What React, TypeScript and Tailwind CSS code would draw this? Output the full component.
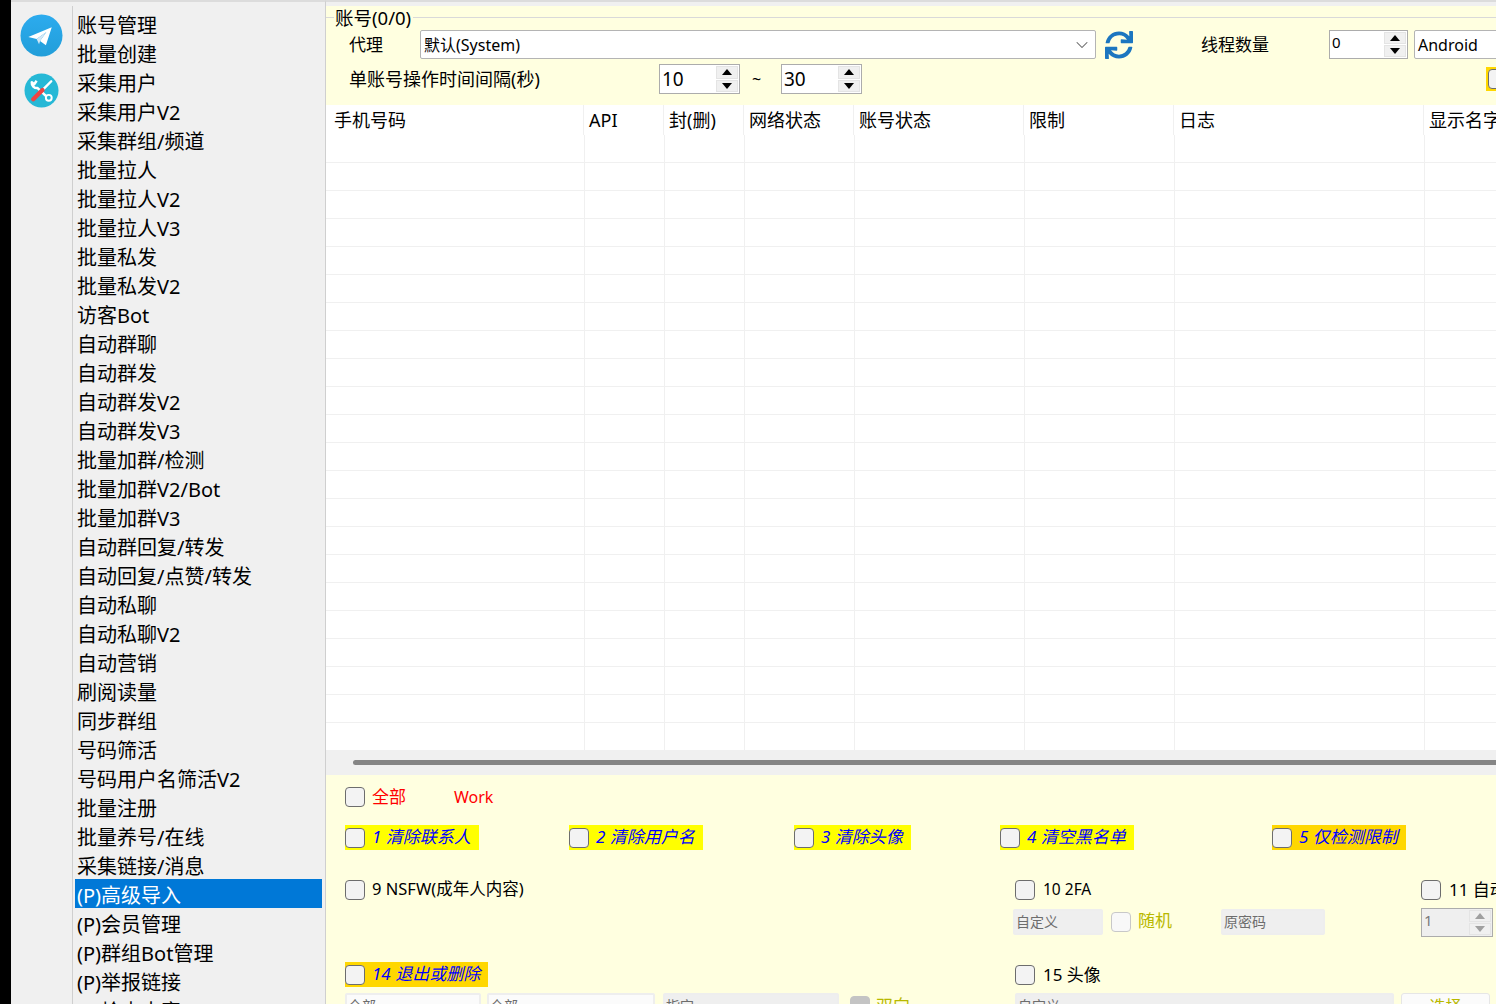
import { FaSync } from "react-icons/fa";
import { ChevronDown } from "lucide-react";

const menuItems = [
  "账号管理", "批量创建", "采集用户", "采集用户V2", "采集群组/频道", "批量拉人", "批量拉人V2", "批量拉人V3",
  "批量私发", "批量私发V2", "访客Bot", "自动群聊", "自动群发", "自动群发V2", "自动群发V3", "批量加群/检测",
  "批量加群V2/Bot", "批量加群V3", "自动群回复/转发", "自动回复/点赞/转发", "自动私聊", "自动私聊V2", "自动营销",
  "刷阅读量", "同步群组", "号码筛活", "号码用户名筛活V2", "批量注册", "批量养号/在线", "采集链接/消息",
  "(P)高级导入", "(P)会员管理", "(P)群组Bot管理", "(P)举报链接", "(P)检查内容",
];

const columns = [
  { name: "手机号码", width: "w-[258px]", body: "w-[259px]", pad: "pl-2" },
  { name: "API", width: "w-[80px]", body: "w-[80px]", pad: "pl-[5px]" },
  { name: "封(删)", width: "w-[80px]", body: "w-[80px]", pad: "pl-[5px]" },
  { name: "网络状态", width: "w-[110px]", body: "w-[110px]", pad: "pl-[5px]" },
  { name: "账号状态", width: "w-[170px]", body: "w-[170px]", pad: "pl-[5px]" },
  { name: "限制", width: "w-[150px]", body: "w-[150px]", pad: "pl-[5px]" },
  { name: "日志", width: "w-[250px]", body: "w-[250px]", pad: "pl-[5px]" },
  { name: "显示名字", width: "w-[200px]", body: "w-[200px]", pad: "pl-[5px]" },
];

const rows = Array.from({ length: 22 }, (_, i) => i);

function Check({ disabled, gray }: { disabled?: boolean; gray?: boolean }) {
  return (
    <span
      className={`block w-5 h-5 shrink-0 rounded-[4px] border ${
        gray
          ? "bg-[#c4c4c4] border-[#c4c4c4]"
          : disabled
            ? "bg-[#f8f8f8] border-[#c8c8c8]"
            : "bg-[#f3f3f3] border-[#6d6d6d]"
      }`}
    />
  );
}

function Spin({ value, big, disabled }: { value: string; big?: boolean; disabled?: boolean }) {
  const arrow = disabled ? "text-[#a0a0a0]" : "text-black";
  return (
    <div
      className={`flex w-full h-full border border-[#acacac] items-stretch py-px pr-px ${
        disabled ? "bg-[#efefef]" : "bg-white"
      }`}
    >
      <span
        className={`flex-1 pl-[2px] leading-none flex items-center ${big ? "text-[19px]" : "text-[15px] pb-1"} ${
          disabled ? "text-[#7a7a7a]" : "text-black"
        }`}
      >
        {value}
      </span>
      <div className="w-[22px] flex flex-col gap-px">
        {[0, 1].map((i) => (
          <div key={i} className={`flex-1 bg-[#f0f0f0] border border-[#e4e4e4] flex items-center justify-center ${arrow}`}>
            <svg viewBox="0 0 10 6" className="w-[10px] h-[6px] fill-current">
              <path d={i === 0 ? "M5 0L10 6H0Z" : "M5 6L0 0H10Z"} />
            </svg>
          </div>
        ))}
      </div>
    </div>
  );
}

function Band({ text, gold, width, className }: { text: string; gold?: boolean; width: string; className?: string }) {
  return (
    <div className={`flex items-center h-[25px] ${width} ${gold ? "bg-[#ffd700]" : "bg-[#ffff00]"} ${className ?? ""}`}>
      <Check />
      <span className="ml-[7px] -mt-px text-[17px] italic text-[#0000ff] whitespace-nowrap">{text}</span>
    </div>
  );
}

function Field({ text, width, filled, className }: { text: string; width: string; filled?: boolean; className?: string }) {
  return (
    <div
      className={`${width} h-[26px] shrink-0 border-2 border-[#eeeeee] rounded-[2px] text-[14px] leading-[21px] pl-[1px] text-[#6d6d6d] ${
        filled ? "bg-[#efefef]" : "bg-[#fbfbfb]"
      } ${className ?? ""}`}
    >
      {text}
    </div>
  );
}

export default function App() {
  return (
    <div className="flex w-[1496px] h-[1004px] overflow-hidden bg-[#f0f0f0] text-black font-['Noto_Sans','Noto_Sans_CJK_SC',sans-serif]">
      <div className="w-[11px] bg-black shrink-0" />

      {/* Left icons + menu */}
      <div className="w-[315px] shrink-0 border-t-2 border-[#dcdcdc] border-r border-r-[#cfcfcf] flex">
        <div className="w-[61px] shrink-0 flex flex-col items-center pt-3">
          <svg viewBox="0 0 44 44" className="w-[43px] h-[43px]">
            <defs>
              <linearGradient id="tg" x1="0" y1="0" x2="0" y2="1">
                <stop offset="0" stopColor="#2cabee" />
                <stop offset="1" stopColor="#229ed9" />
              </linearGradient>
            </defs>
            <circle cx="22" cy="22" r="21.5" fill="url(#tg)" />
            <path d="M8.5 23.5L32.5 13.5 26.5 32 20.5 27.5 27 18.5 17 25.5Z" fill="#fff" />
            <path d="M17 25.5L19.5 31 20.5 27.5 27 18.5Z" fill="#d5e8f5" />
          </svg>
          <svg viewBox="0 0 36 36" className="w-[35px] h-[35px] mt-4">
            <circle cx="18" cy="18" r="17.5" fill="#26b8d6" />
            <path d="M13 8L10.5 11.5 8 9.5A5.5 5.5 0 0 0 14 15.5L23 24" stroke="#fff" strokeWidth="2.6" fill="none" strokeLinejoin="round" />
            <circle cx="25.5" cy="25.5" r="3" stroke="#fff" strokeWidth="2" fill="none" />
            <path d="M28 8.5L20 16.5" stroke="#fff" strokeWidth="2.5" strokeLinecap="round" />
            <path d="M19 17.5L9.5 27" stroke="#ef4444" strokeWidth="4.5" strokeLinecap="round" />
          </svg>
        </div>
        <div className="flex-1 min-w-0 mt-1 border-l border-[#cfcfcf] pt-[3px] pl-[2px] pr-[3px] overflow-hidden">
          {menuItems.map((item) => (
            <div
              key={item}
              className={`h-[29px] pl-0.5 text-[20px] leading-[33px] whitespace-nowrap ${
                item === "(P)高级导入" ? "bg-[#0078d7] text-white" : ""
              }`}
            >
              {item}
            </div>
          ))}
        </div>
      </div>

      {/* Right panel */}
      <div className="flex-1 min-w-0 flex flex-col border-t-2 border-[#dcdcdc]">
        <div className="h-1 shrink-0" />

        {/* Account group */}
        <div className="h-[99px] shrink-0 bg-[#ffffe0] flex flex-col">
          <div className="flex items-start h-6 shrink-0">
            <div className="w-2 h-px mt-[11px] bg-[#d9d9d9]" />
            <span className="text-[18.5px] leading-6 px-px whitespace-nowrap">账号(0/0)</span>
            <div className="flex-1 h-px mt-[11px] bg-[#d9d9d9] ml-px" />
          </div>
          <div className="flex items-center h-[29px] ml-[23px]">
            <span className="w-[71px] shrink-0 text-[17px]">代理</span>
            <div className="w-[676px] h-full shrink-0 bg-white border border-[#b4b4b4] rounded-[2px] flex items-center justify-between pl-[3px] pr-[3px]">
              <span className="text-[16px]">默认(System)</span>
              <ChevronDown className="w-5 h-5 text-[#606060]" strokeWidth={1.25} />
            </div>
            <FaSync className="w-[28px] h-[28px] ml-[9px] shrink-0 text-[#1c76c0]" />
            <span className="ml-[68px] w-[128px] shrink-0 text-[17px]">线程数量</span>
            <div className="w-[79px] h-full shrink-0">
              <Spin value="0" />
            </div>
            <div className="ml-[6px] w-[120px] h-full shrink-0 bg-white border border-[#b4b4b4] rounded-[2px] pl-[3px] text-[16px] leading-[28px]">
              Android
            </div>
          </div>
          <div className="flex items-center h-[30px] mt-[5px] ml-[23px]">
            <span className="w-[310px] shrink-0 text-[18px]">单账号操作时间间隔(秒)</span>
            <div className="w-[81px] h-full shrink-0">
              <Spin value="10" big />
            </div>
            <span className="ml-[12px] w-[29px] shrink-0 text-[16px]">~</span>
            <div className="w-[81px] h-full shrink-0">
              <Spin value="30" big />
            </div>
            <div className="ml-[624px] w-[30px] h-6 shrink-0 bg-[#ffd700] pl-[2px] pt-[2px]">
              <Check />
            </div>
          </div>
        </div>

        {/* Accounts table */}
        <div className="h-[645px] shrink-0 bg-white overflow-hidden">
          <div className="flex h-[30px]">
            {columns.map((col) => (
              <div
                key={col.name}
                className={`${col.width} shrink-0 ${col.pad} h-full border-r border-[#f0f0f0] text-[18px] leading-[30px] whitespace-nowrap`}
              >
                {col.name}
              </div>
            ))}
          </div>
          {rows.map((row) => (
            <div key={row} className="flex h-[28px] border-b border-[#f0f0f0]">
              {columns.map((col) => (
                <div key={col.name} className={`${col.body} shrink-0 h-full border-r border-[#f0f0f0]`} />
              ))}
            </div>
          ))}
        </div>

        {/* Scrollbar */}
        <div className="h-[25px] shrink-0 pl-[27px] pt-[10px]">
          <div className="h-[5px] w-[1300px] rounded-full bg-[#858585]" />
        </div>

        {/* Options */}
        <div className="flex-1 min-h-0 bg-[#ffffe0] pl-[19px] overflow-hidden">
          <div className="flex items-center h-5 mt-3">
            <Check />
            <span className="ml-[7px] w-[82px] text-[17px] text-[#ff0000]">全部</span>
            <span className="text-[16px] text-[#ff0000]">Work</span>
          </div>
          <div className="flex mt-[18px]">
            <Band text="1 清除联系人" width="w-[134px]" />
            <Band text="2 清除用户名" width="w-[134px]" className="ml-[90px]" />
            <Band text="3 清除头像" width="w-[117px]" className="ml-[91px]" />
            <Band text="4 清空黑名单" width="w-[134px]" className="ml-[89px]" />
            <Band text="5 仅检测限制" width="w-[134px]" gold className="ml-[138px]" />
          </div>
          <div className="flex mt-[30px]">
            <div className="w-[670px] shrink-0 flex items-center h-5">
              <Check />
              <span className="ml-[7px] -mt-px text-[16.5px] whitespace-nowrap">9 NSFW(成年人内容)</span>
            </div>
            <div className="w-[406px] shrink-0 flex items-center h-5">
              <Check />
              <span className="ml-2 -mt-px text-[15.5px] whitespace-nowrap">10 2FA</span>
            </div>
            <div className="flex items-center h-5">
              <Check />
              <span className="ml-2 -mt-px text-[17px] whitespace-nowrap">11 自动</span>
            </div>
          </div>
          <div className="flex items-center h-[30px] mt-[7px] ml-[668px]">
            <Field text="自定义" width="w-[90px]" filled />
            <div className="ml-2">
              <Check disabled />
            </div>
            <span className="ml-[7px] -mt-[3px] w-[83px] shrink-0 text-[17px] text-[#b8b800]">随机</span>
            <Field text="原密码" width="w-[104px]" filled />
            <div className="ml-[96px] w-[72px] h-[29px] shrink-0">
              <Spin value="1" disabled />
            </div>
          </div>
          <div className="flex mt-[25px]">
            <Band text="14 退出或删除" width="w-[143px]" gold />
            <div className="ml-[527px] flex items-center h-[25px]">
              <Check />
              <span className="ml-2 text-[17px] whitespace-nowrap">15 头像</span>
            </div>
          </div>
          <div className="flex items-center mt-[6px]">
            <Field text="全部" width="w-[136px]" />
            <Field text="全部" width="w-[168px]" className="ml-[6px]" />
            <Field text="指定" width="w-[176px]" filled className="ml-2" />
            <div className="ml-[11px]">
              <Check gray />
            </div>
            <span className="ml-[6px] w-[139px] shrink-0 text-[17px] text-[#b8b800]">双向</span>
            <Field text="自定义" width="w-[379px]" filled />
            <div className="ml-[7px] w-[89px] h-[26px] shrink-0 border border-[#e6e6e6] rounded-[3px] bg-[#fbfbfb] text-center text-[16px] text-[#b8b800]">
              选择
            </div>
          </div>
        </div>
      </div>
    </div>
  );
}
